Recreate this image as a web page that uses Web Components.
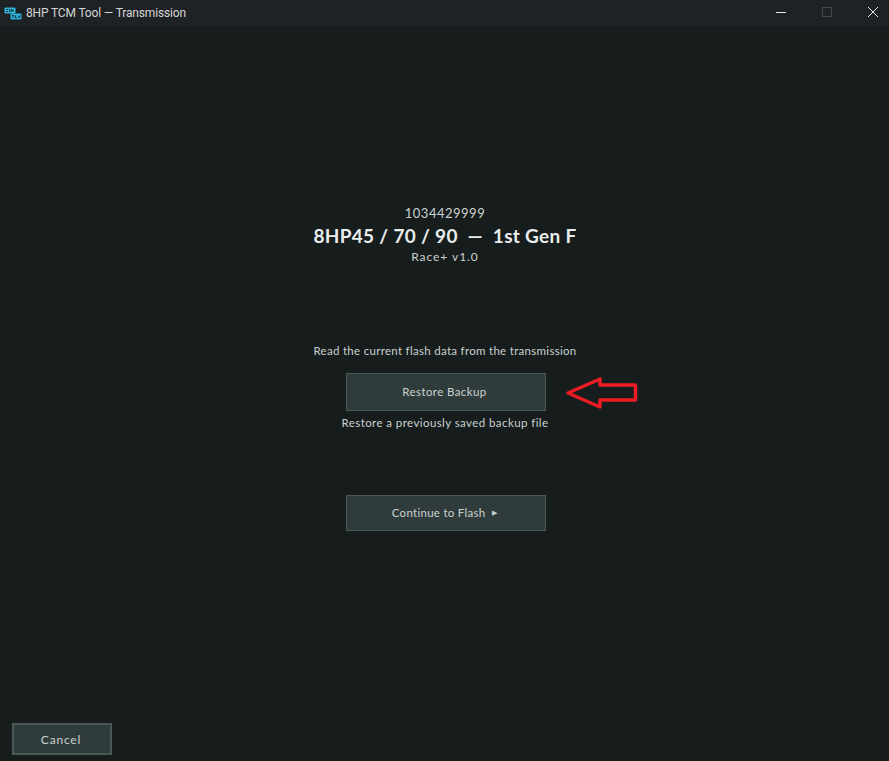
<!DOCTYPE html>
<html lang="en">
<head>
<meta charset="utf-8">
<title>8HP TCM Tool — Transmission</title>
<style>
  html, body { margin: 0; height: 100%; background: #171c1c; }
  body { font-family: "Lato", "Liberation Sans", sans-serif; overflow: hidden; }
</style>
</head>
<body>
<app-window>
  <title-bar slot="top" label="8HP TCM Tool — Transmission"></title-bar>
  <tune-heading slot="head" code="1034429999" name="8HP45 / 70 / 90  —  1st Gen F" version="Race+ v1.0"></tune-heading>
  <backup-panel slot="main"></backup-panel>
  <tool-button slot="foot" kind="cancel">Cancel</tool-button>
</app-window>

<script>
// Ventana principal: barra, cabecera, panel y pie
class AppWindow extends HTMLElement {
  constructor() {
    super();
    this.attachShadow({ mode: 'open' });
    this.shadowRoot.innerHTML = `
      <style>
        :host { display: flex; flex-direction: column; height: 761px; width: 889px; }
        .body { flex: 1; display: flex; flex-direction: column; align-items: center; padding: 179px 0 0 3px; }
        .foot { padding: 0 0 6px 12px; }
      </style>
      <slot name="top"></slot>
      <div class="body">
        <slot name="head"></slot>
        <slot name="main"></slot>
      </div>
      <div class="foot"><slot name="foot"></slot></div>
    `;
  }
}

class TitleBar extends HTMLElement {
  constructor() {
    super();
    this.attachShadow({ mode: 'open' });
  }

  connectedCallback() {
    this.shadowRoot.innerHTML = `
      <style>
        :host { display: flex; align-items: center; height: 26px; background: #1f2225; color: #d4d6d6;
                font: 12px "Roboto", "Liberation Sans", sans-serif; letter-spacing: -0.15px; }
        .logo { margin: 0 4px 0 4px; flex: none; }
        .label { flex: 1; padding-bottom: 1px; }
        .ctl { width: 46px; height: 26px; display: flex; align-items: center; justify-content: center; flex: none; margin-top: -3px; }
        .last { margin-right: -7px; }
      </style>
      <svg class="logo" width="18" height="15" viewBox="0 0 18 15">
        <rect x="0.5" y="1.5" width="11" height="6" rx="1" fill="#2fb4d6"/>
        <rect x="6.5" y="7.5" width="11" height="6" rx="1" fill="#2fb4d6"/>
        <path d="M2 3.500h2M2 5.500h2M5 3.500h1v2h-1M7.500 5.500v-2l1.500 2v-2M8 9.500h2M9 9.500v2.500M11.500 9.500v2.500h1.500M15 9.500v2.500l1.500-2.500" stroke="#0d2a33" stroke-width="0.9" fill="none"/>
      </svg>
      <span class="label">${this.getAttribute('label')}</span>
      <span class="ctl"><svg width="12" height="12" viewBox="0 0 12 12"><path d="M1 6.500h10" stroke="#e6e8e8" stroke-width="1"/></svg></span>
      <span class="ctl"><svg width="12" height="12" viewBox="0 0 12 12"><rect x="1.500" y="1.500" width="9" height="9" fill="none" stroke="#45484b" stroke-width="1"/></svg></span>
      <span class="ctl last"><svg width="12" height="12" viewBox="0 0 12 12"><path d="M1 1l10 10M11 1L1 11" stroke="#e6e8e8" stroke-width="1"/></svg></span>
    `;
  }
}

class TuneHeading extends HTMLElement {
  constructor() {
    super();
    this.attachShadow({ mode: 'open' });
  }

  connectedCallback() {
    this.shadowRoot.innerHTML = `
      <style>
        :host { display: flex; flex-direction: column; align-items: center; color: #c9d2d0; margin-left: -2px; }
        .code { font-size: 13px; line-height: 16px; letter-spacing: 0.5px; }
        .name { font-size: 19px; line-height: 26px; font-weight: 700; color: #e9eded; white-space: pre; letter-spacing: 0.3px; margin-top: 2px; }
        .version { font-size: 12px; line-height: 16px; letter-spacing: 0.95px; }
      </style>
      <span class="code">${this.getAttribute('code')}</span>
      <span class="name">${this.getAttribute('name')}</span>
      <span class="version">${this.getAttribute('version')}</span>
    `;
  }
}

class BackupPanel extends HTMLElement {
  constructor() {
    super();
    this.attachShadow({ mode: 'open' });
    this.shadowRoot.innerHTML = `
      <style>
        :host { display: flex; flex-direction: column; align-items: center; color: #c9d2d0; margin-top: 78px; }
        p { margin: 0 0 0 -2px; font-size: 11.500px; line-height: 16px; letter-spacing: 0.3px; }
        .restore { position: relative; margin: 14px 0 4px; }
        .arrow { position: absolute; left: 218px; top: 2px; }
        .next { margin-top: 64px; }
        .wide { letter-spacing: 0.42px; }
      </style>
      <p>Read the current flash data from the transmission</p>
      <div class="restore">
        <tool-button>Restore Backup</tool-button>
        <svg class="arrow" width="76" height="36" viewBox="0 0 76 36">
          <path d="M4 18L36 4v6h35.500v15H36v7z" fill="none" stroke="#ec1c24" stroke-width="3.500" stroke-linejoin="round"/>
        </svg>
      </div>
      <p class="wide">Restore a previously saved backup file</p>
      <div class="next"><tool-button kind="next">Continue to Flash&nbsp;&nbsp;<span style="font-size:7px;vertical-align:1px">&#9654;</span></tool-button></div>
    `;
  }
}

// Botón con borde; el atributo kind cambia el tamaño
class ToolButton extends HTMLElement {
  constructor() {
    super();
    this.attachShadow({ mode: 'open' });
    this.shadowRoot.innerHTML = `
      <style>
        :host { display: flex; align-items: center; justify-content: center; box-sizing: border-box;
                width: 200px; height: 38px; padding: 0 3px 2px 0; background: #303c3b; border: 1px solid #4a5856;
                color: #c9d2d0; font-size: 11.500px; letter-spacing: 0.4px; }
        :host([kind="next"]) { height: 36px; letter-spacing: 0.28px; }
        :host([kind="cancel"]) { width: 100px; height: 32px; padding: 0 2px 0 0; border-width: 2px; font-size: 12px; letter-spacing: 0.8px; }
      </style>
      <slot></slot>
    `;
  }
}

customElements.define('app-window', AppWindow);
customElements.define('title-bar', TitleBar);
customElements.define('tune-heading', TuneHeading);
customElements.define('backup-panel', BackupPanel);
customElements.define('tool-button', ToolButton);
</script>
</body>
</html>
